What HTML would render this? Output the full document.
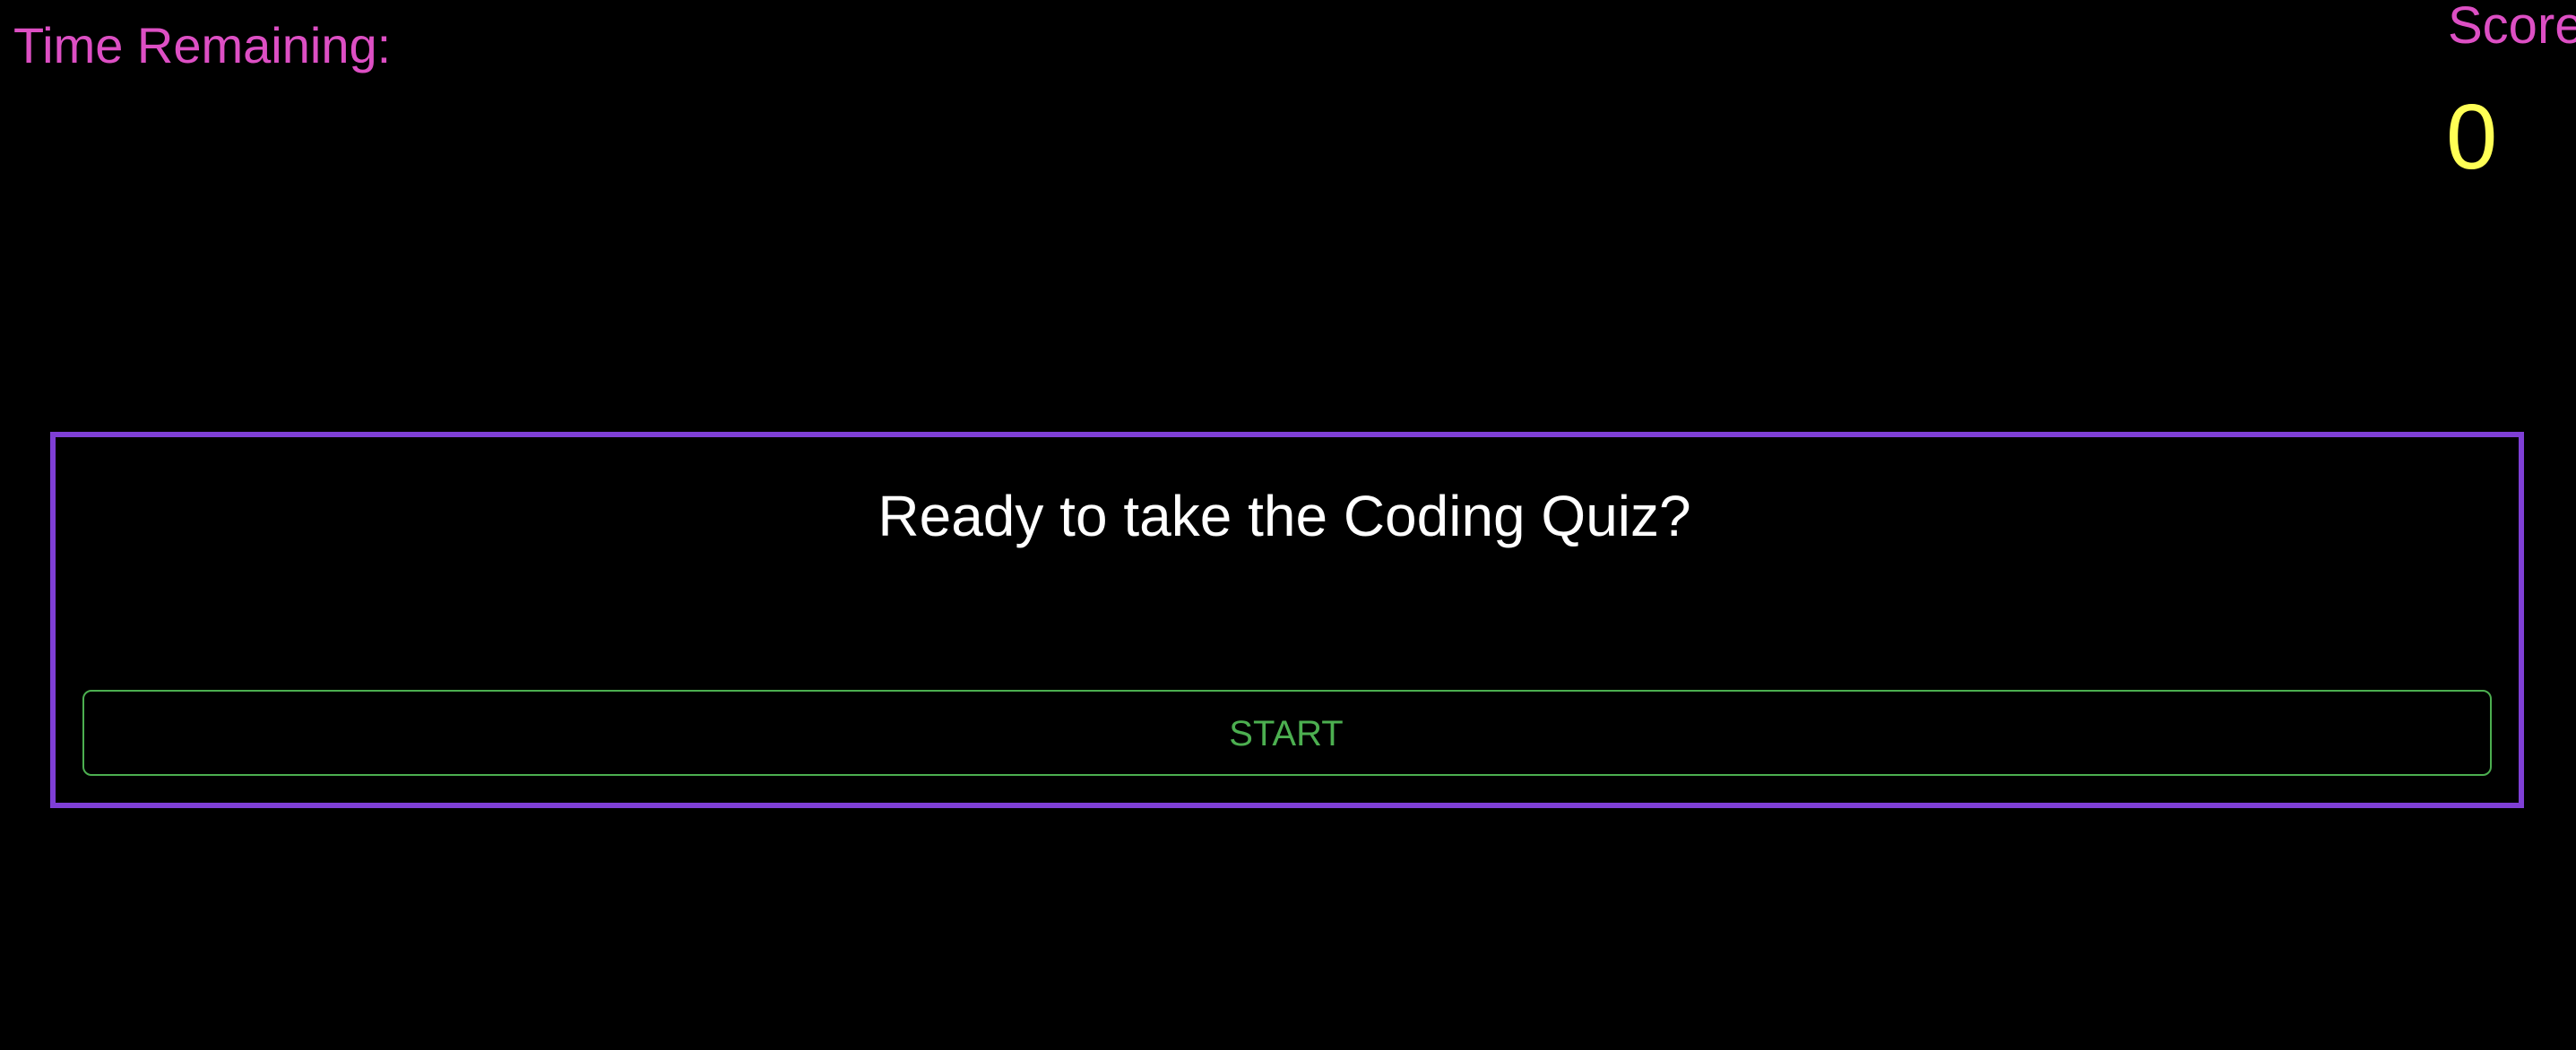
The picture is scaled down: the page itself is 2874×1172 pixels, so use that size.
<!DOCTYPE html>
<html><head><meta charset="utf-8"><style>
html,body{margin:0;padding:0;background:#000;width:2874px;height:1172px;overflow:hidden;font-family:"Liberation Sans",sans-serif;}
.a{position:absolute;line-height:1;white-space:nowrap;}
</style></head><body>
<div class="a" style="left:15px;top:23px;font-size:56px;color:#dd4fc4;">Time Remaining:</div>
<div class="a" style="left:2731px;top:0px;font-size:58px;color:#dd4fc4;">Score</div>
<div class="a" style="left:2729px;top:101px;font-size:103px;color:#ffff55;">0</div>
<div style="position:absolute;left:56px;top:482px;width:2748px;height:408px;border:6px solid #7f3fd6;"></div>
<div class="a" style="left:0;width:2866px;text-align:center;top:544px;font-size:64px;color:#fff;">Ready to take the Coding Quiz?</div>
<div style="position:absolute;left:92px;top:770px;width:2684px;height:92px;border:2px solid #4caf50;border-radius:10px;"></div>
<div class="a" style="left:0;width:2870px;text-align:center;top:799px;font-size:40px;color:#4caf50;">START</div>
</body></html>
